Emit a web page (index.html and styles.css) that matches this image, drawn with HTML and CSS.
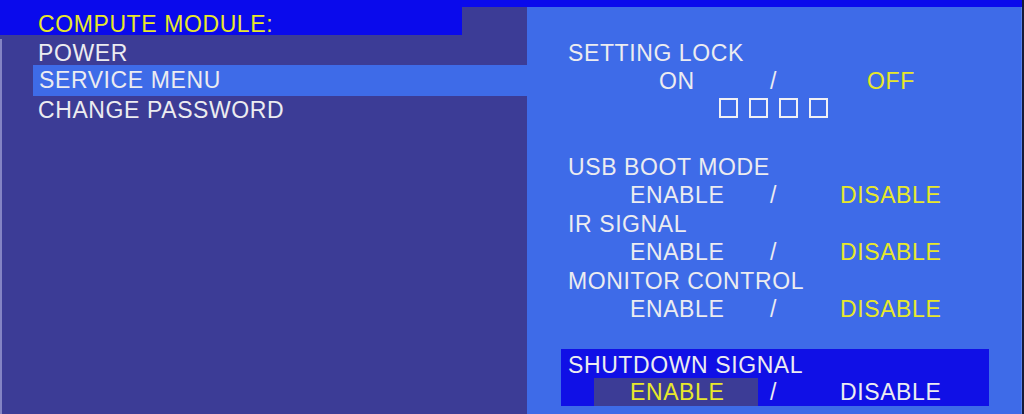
FILE: index.html
```html
<!DOCTYPE html>
<html>
<head>
<meta charset="utf-8">
<link rel="stylesheet" href="styles.css">
</head>
<body>
<div class="screen">
  <div class="topbar"></div>
  <div class="main">
    <div class="left">
      <div class="header"><span class="yellow">COMPUTE MODULE:</span></div>
      <div class="menu">
        <div class="item">POWER</div>
        <div class="item selected">SERVICE MENU</div>
        <div class="item">CHANGE PASSWORD</div>
      </div>
    </div>
    <div class="right">
      <div class="line">SETTING LOCK</div>
      <div class="line opt onoff"><span class="o1">ON</span><span class="o2">/</span><span class="yellow">OFF</span></div>
      <div class="line boxes"><span class="box"></span><span class="box"></span><span class="box"></span><span class="box"></span></div>
      <div class="line"></div>
      <div class="line">USB BOOT MODE</div>
      <div class="line opt endis"><span class="o1">ENABLE</span><span class="o2">/</span><span class="yellow">DISABLE</span></div>
      <div class="line">IR SIGNAL</div>
      <div class="line opt endis"><span class="o1">ENABLE</span><span class="o2">/</span><span class="yellow">DISABLE</span></div>
      <div class="line">MONITOR CONTROL</div>
      <div class="line opt endis"><span class="o1">ENABLE</span><span class="o2">/</span><span class="yellow">DISABLE</span></div>
      <div class="shutdown">
        <div class="sd-title">SHUTDOWN SIGNAL</div>
        <div class="sd-opt"><span class="sd-enable yellow">ENABLE</span><span class="sd-slash">/</span><span>DISABLE</span></div>
      </div>
    </div>
  </div>
</div>
</body>
</html>
```

FILE: styles.css
```css
* { box-sizing: border-box; }
html, body { margin: 0; padding: 0; }
body {
  width: 1024px;
  height: 414px;
  overflow: hidden;
  background: #3c3c96;
  font-family: "Liberation Sans", Arial, sans-serif;
  font-size: 23px;
  letter-spacing: 0.6px;
  color: #ececf0;
}
.screen {
  width: 1024px;
  height: 414px;
  display: flex;
  flex-direction: column;
  border-right: 2px solid #141a3a;
}
.topbar {
  height: 7px;
  background: #0a0aec;
  flex: none;
}
.main {
  flex: 1;
  display: flex;
}
.left {
  width: 527px;
  background: #3c3c96;
  display: flex;
  flex-direction: column;
}
.header {
  width: 462px;
  height: 28px;
  background: #0a0aec;
  padding-left: 38px;
  padding-top: 3px;
  line-height: 28.5px;
  margin-bottom: 3.75px;
  white-space: nowrap;
}
.menu {
  flex: 1;
  border-left: 2px solid #8484c4;
}
.item {
  height: 28.5px;
  line-height: 28.5px;
  padding-left: 36px;
  white-space: nowrap;
}
.item.selected {
  background: #3e6be8;
  margin-left: 31px;
  padding-left: 6px;
  height: 31px;
  margin-top: -2.5px;
  line-height: 31px;
}
.yellow { color: #e8e82a; }
.right {
  flex: 1;
  background: #3e6be8;
  padding-top: 31.75px;
  padding-left: 41px;
  border-right: 1px solid #5a80f0;
}
.line {
  height: 28.5px;
  line-height: 28.5px;
  white-space: nowrap;
  display: flex;
  align-items: center;
}
.onoff { padding-left: 91px; }
.onoff .o1 { width: 111px; }
.onoff .o2 { width: 97px; }
.endis { padding-left: 62px; }
.endis .o1 { width: 140px; }
.endis .o2 { width: 70px; }
.boxes {
  padding-left: 151px;
  gap: 11px;
  align-items: flex-start;
  padding-top: 2px;
}
.box {
  width: 19px;
  height: 20px;
  border: 2px solid #f0f0f4;
}
.shutdown {
  margin-top: 25.25px;
  margin-left: -7px;
  width: 428px;
  height: 57px;
  background: #1010e6;
  padding-top: 3px;
}
.sd-title {
  height: 26px;
  line-height: 26px;
  padding-left: 7px;
  white-space: nowrap;
}
.sd-opt {
  height: 28px;
  line-height: 28px;
  display: flex;
  white-space: nowrap;
}
.sd-enable {
  margin-left: 33px;
  width: 164px;
  padding-left: 36px;
  background: #3c3c96;
}
.sd-slash {
  margin-left: 12px;
  width: 70px;
}
```
